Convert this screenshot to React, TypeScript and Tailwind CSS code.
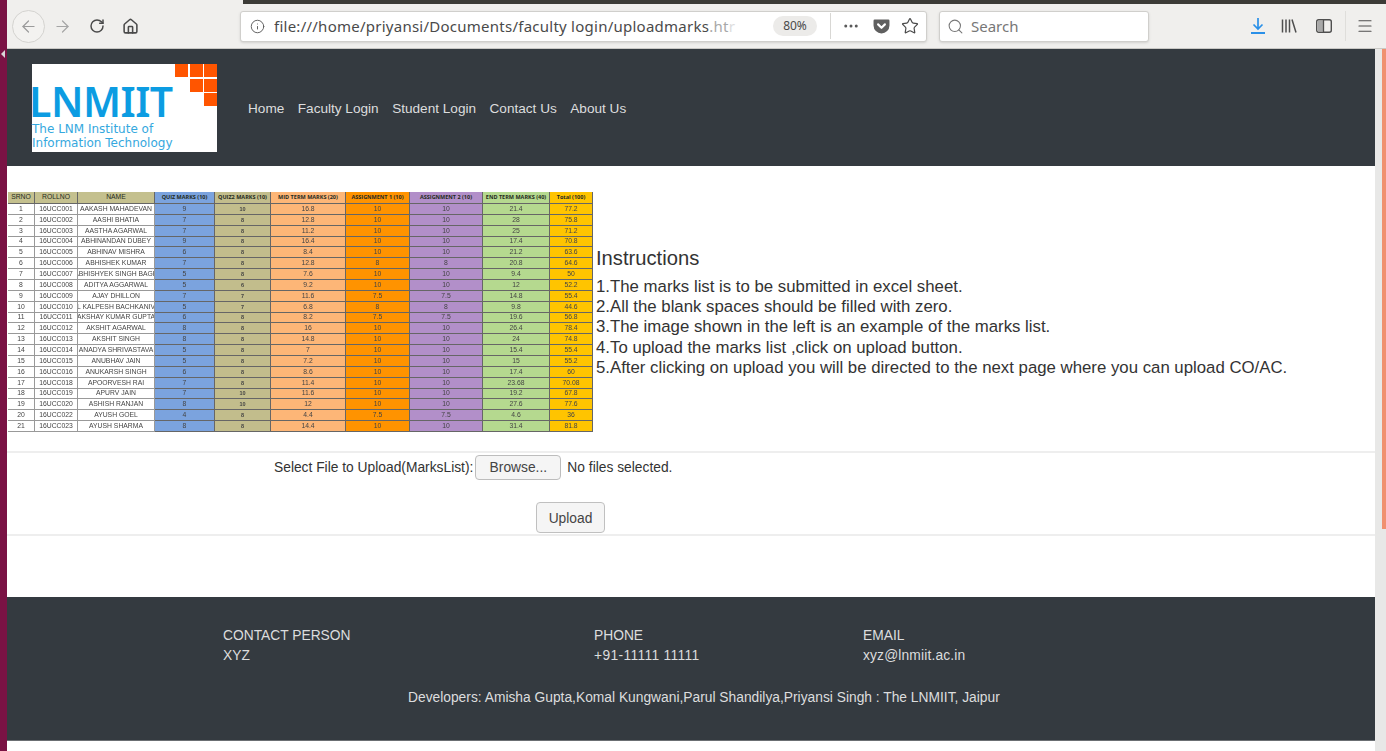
import { ArrowLeft, ArrowRight, Ellipsis, Home, Info, Menu, RotateCw, Search, Star } from "lucide-react";

const font = "font-['Liberation_Sans',Arial,sans-serif]";

const cols = ["bg-white", "bg-white", "bg-white", "bg-[#7ba3de]", "bg-[#c2bd8c]", "bg-[#fdb677]", "bg-[#ff9300]", "bg-[#b28fc9]", "bg-[#b5d98f]", "bg-[#ffc400]"];

const headers = ["SRNO", "ROLLNO", "NAME", "QUIZ MARKS (10)", "QUIZ2 MARKS (10)", "MID TERM MARKS (20)", "ASSIGNMENT 1 (10)", "ASSIGNMENT 2 (10)", "END TERM MARKS (40)", "Total (100)"];

const rows = [
  ["1", "16UCC001", "AAKASH MAHADEVAN", "9", "10", "16.8", "10", "10", "21.4", "77.2"],
  ["2", "16UCC002", "AASHI BHATIA", "7", "8", "12.8", "10", "10", "28", "75.8"],
  ["3", "16UCC003", "AASTHA AGARWAL", "7", "8", "11.2", "10", "10", "25", "71.2"],
  ["4", "16UCC004", "ABHINANDAN DUBEY", "9", "8", "16.4", "10", "10", "17.4", "70.8"],
  ["5", "16UCC005", "ABHINAV MISHRA", "6", "8", "8.4", "10", "10", "21.2", "63.6"],
  ["6", "16UCC006", "ABHISHEK KUMAR", "7", "8", "12.8", "8", "8", "20.8", "64.6"],
  ["7", "16UCC007", "ABHISHYEK SINGH BAGH", "5", "8", "7.6", "10", "10", "9.4", "50"],
  ["8", "16UCC008", "ADITYA AGGARWAL", "5", "6", "9.2", "10", "10", "12", "52.2"],
  ["9", "16UCC009", "AJAY DHILLON", "7", "7", "11.6", "7.5", "7.5", "14.8", "55.4"],
  ["10", "16UCC010", "L KALPESH BACHKANIV", "5", "7", "6.8", "8", "8", "9.8", "44.6"],
  ["11", "16UCC011", "AKSHAY KUMAR GUPTA", "6", "8", "8.2", "7.5", "7.5", "19.6", "56.8"],
  ["12", "16UCC012", "AKSHIT AGARWAL", "8", "8", "16", "10", "10", "26.4", "78.4"],
  ["13", "16UCC013", "AKSHIT SINGH", "8", "8", "14.8", "10", "10", "24", "74.8"],
  ["14", "16UCC014", "ANADYA SHRIVASTAVA", "5", "8", "7", "10", "10", "15.4", "55.4"],
  ["15", "16UCC015", "ANUBHAV JAIN", "5", "8", "7.2", "10", "10", "15", "55.2"],
  ["16", "16UCC016", "ANUKARSH SINGH", "6", "8", "8.6", "10", "10", "17.4", "60"],
  ["17", "16UCC018", "APOORVESH RAI", "7", "8", "11.4", "10", "10", "23.68", "70.08"],
  ["18", "16UCC019", "APURV JAIN", "7", "10", "11.6", "10", "10", "19.2", "67.8"],
  ["19", "16UCC020", "ASHISH RANJAN", "8", "10", "12", "10", "10", "27.6", "77.6"],
  ["20", "16UCC022", "AYUSH GOEL", "4", "8", "4.4", "7.5", "7.5", "4.6", "36"],
  ["21", "16UCC023", "AYUSH SHARMA", "8", "8", "14.4", "10", "10", "31.4", "81.8"],
];

const instructions = [
  "1.The marks list is to be submitted in excel sheet.",
  "2.All the blank spaces should be filled with zero.",
  "3.The image shown in the left is an example of the marks list.",
  "4.To upload the marks list ,click on upload button.",
  "5.After clicking on upload you will be directed to the next page where you can upload CO/AC.",
];

function Toolbar() {
  return (
    <div className="flex h-[45px] items-center border-b border-[#c9c8c5] bg-[#f0efed] font-['Noto_Sans',sans-serif] text-[#4a4a4a]">
      <div className="ml-[5px] flex h-[33px] w-[33px] items-center justify-center rounded-full border border-[#d4d3d0] bg-[#f3f2f0]">
        <ArrowLeft size={19} strokeWidth={1.5} className="text-[#9b9b9b]" />
      </div>
      <ArrowRight size={19} strokeWidth={1.5} className="ml-[8px] text-[#a5a5a5]" />
      <RotateCw size={16} strokeWidth={2.2} className="ml-[17px] text-[#4a4a4a]" />
      <Home size={17} strokeWidth={2.2} className="ml-[17px] text-[#4a4a4a]" />

      <div className="ml-[101px] flex h-[31px] w-[687px] items-center rounded-[3px] border border-[#d0cfcc] bg-white shadow-sm">
        <Info size={15} strokeWidth={1.5} className="ml-[9px] text-[#5a5a5a]" />
        <div className="ml-[9px] w-[463px] overflow-hidden whitespace-nowrap text-[15px] tracking-[0.25px]">
          file:///home/priyansi/Documents/faculty login/uploadmarks<span className="text-[#a8a8a8]">.ht</span>
          <span className="text-[#dddddd]">r</span>
        </div>
        <div className="ml-[36px] flex h-[20px] w-[44px] items-center justify-center rounded-full bg-[#ecebe9] text-[12px]">80%</div>
        <div className="ml-[13px] h-[26px] w-px bg-[#d8d7d4]" />
        <Ellipsis size={18} className="ml-[11px] text-[#5a5a5a]" />
        <svg width="17" height="17" viewBox="0 0 16 16" className="ml-[13px]">
          <path d="M1.5 1.5h13a1 1 0 0 1 1 1V7a7.5 7.5 0 0 1-15 0V2.5a1 1 0 0 1 1-1z" fill="#5f5f5f" />
          <path d="M4.8 6l3.2 3.2L11.2 6" fill="none" stroke="#fff" strokeWidth="2" strokeLinecap="round" strokeLinejoin="round" />
        </svg>
        <Star size={18} strokeWidth={1.6} className="ml-[11px] text-[#4a4a4a]" />
      </div>

      <div className="ml-[12px] flex h-[31px] w-[210px] items-center rounded-[3px] border border-[#d0cfcc] bg-white shadow-sm">
        <Search size={17} strokeWidth={1.5} className="ml-[7px] text-[#777]" />
        <span className="ml-[7px] text-[15px] text-[#777]">Search</span>
      </div>

      <svg width="18" height="20" viewBox="0 0 18 20" className="ml-[100px]">
        <path d="M9 2v11M4.5 8.5L9 13l4.5-4.5" fill="none" stroke="#2a90e8" strokeWidth="1.7" />
        <path d="M2 17h14" stroke="#2a90e8" strokeWidth="2" />
      </svg>
      <svg width="18" height="18" viewBox="0 0 18 18" className="ml-[13px]">
        <path d="M2.5 2.5v13M6 2.5v13M9.5 2.5v13M12 2.5l4 13" fill="none" stroke="#4f4f4f" strokeWidth="1.5" />
      </svg>
      <svg width="18" height="18" viewBox="0 0 18 18" className="ml-[17px]">
        <rect x="1.7" y="2.7" width="14.6" height="12.6" rx="2" fill="none" stroke="#4f4f4f" strokeWidth="1.4" />
        <rect x="3" y="4" width="5" height="10" fill="#a8a8a8" />
        <path d="M8.5 3v12" stroke="#4f4f4f" strokeWidth="1.3" />
      </svg>
      <div className="ml-[12px] h-[30px] w-px bg-[#dfdedb]" />
      <Menu size={18} strokeWidth={1.6} className="ml-[10px] text-[#4f4f4f]" />
    </div>
  );
}

function Logo() {
  return (
    <div className="relative h-[88px] w-[185px] bg-white text-[#0c9ce2]">
      <svg width="185" height="88" viewBox="0 0 185 88" className="absolute inset-0">
        <rect x="143" y="0" width="13" height="13" fill="#ff5500" />
        <rect x="158" y="0" width="13" height="13" fill="#ff5500" />
        <rect x="172" y="0" width="13" height="13" fill="#ff5500" />
        <rect x="158" y="15" width="13" height="13" fill="#ff5500" />
        <rect x="172" y="15" width="13" height="13" fill="#ff5500" />
        <rect x="172" y="29" width="13" height="13" fill="#ff5500" />
      </svg>
      <div className="absolute left-[-3px] top-[22px] font-['Noto_Sans',sans-serif] text-[41px] font-semibold leading-[30px] tracking-[-0.5px]">LNMIIT</div>
      <div className="absolute left-0 top-[58px] font-['DejaVu_Sans',sans-serif] text-[12px] leading-[14.5px] text-[#35a8de]">
        The LNM Institute of
        <br />
        Information Technology
      </div>
    </div>
  );
}

function MarksTable() {
  return (
    <div className="grid w-[585px] shrink-0 grid-cols-[27px_43px_77px_60px_56px_75px_64px_73px_67px_43px] grid-rows-[12px_repeat(21,10.86px)] blur-[0.3px]">
      {headers.map((h, i) => (
        <div
          key={h}
          className={`flex items-center justify-center overflow-hidden whitespace-nowrap border-b border-r border-[#666] text-[#1f2a20] ${
            i < 3 ? "bg-[#c4c08e] text-[6.8px]" : `${cols[i]} font-['Open_Sans',sans-serif] text-[5.5px] font-bold`
          }`}
        >
          {h}
        </div>
      ))}
      {rows.map((row) =>
        row.map((cell, i) => (
          <div
            key={`${row[1]}-${i}`}
            className={`flex items-center justify-center overflow-hidden whitespace-nowrap border-b border-r text-[#444] ${cols[i]} ${
              i < 3 ? "border-[#999]" : "border-[#666]"
            } ${i === 4 ? "text-[5.5px] font-bold text-[#222]" : "text-[6.8px]"}`}
          >
            {cell}
          </div>
        )),
      )}
    </div>
  );
}

export default function App() {
  return (
    <div className={`flex h-[751px] w-[1386px] overflow-hidden bg-white ${font}`}>
      <div className="flex w-[7px] shrink-0 flex-col bg-[#7a1244]">
        <div className="ml-[1px] mt-[50px] h-0 w-0 border-y-[4px] border-r-[4px] border-y-transparent border-r-[#d8d8d8]" />
      </div>

      <div className="flex min-w-0 flex-1 flex-col">
        <div className="flex h-[49px] flex-col bg-[#f0efed]">
          <div className="ml-[236px] h-[4px] bg-[#3c3b37]" />
          <Toolbar />
        </div>

        <div className="flex flex-1">
          <main className="flex w-[1368px] flex-col">
            <header className="flex h-[117px] items-center bg-[#343a40] pl-[25px]">
              <Logo />
              <nav className="ml-[31px] mt-[3px] flex gap-[13.5px] text-[13.6px] text-[#dcddde]">
                <span>Home</span>
                <span>Faculty Login</span>
                <span>Student Login</span>
                <span>Contact Us</span>
                <span>About Us</span>
              </nav>
            </header>

            <section className="mt-[26px] flex items-center pl-[1px] text-[#333]">
              <MarksTable />
              <div className="ml-[3px]">
                <h2 className="mb-[7px] text-[20.2px] leading-[24px]">Instructions</h2>
                <ul className="text-[16.8px] leading-[20.4px]">
                  {instructions.map((line) => (
                    <li key={line}>{line}</li>
                  ))}
                </ul>
              </div>
            </section>

            <section className="mt-[19px] h-[85px] border-y-2 border-[#eeeeee] text-[13.8px] text-[#333]">
              <div className="flex h-[27px] items-end pl-[267px]">
                <span className="mb-[1px]">Select File to Upload(MarksList):</span>
                <button className="ml-[2px] h-[25px] w-[86px] rounded-[4px] border border-[#bdbdbd] bg-[#f5f5f5] pt-[2px] text-[13.8px] text-[#444]">
                  Browse...
                </button>
                <span className="mb-[1px] ml-[6px]">No files selected.</span>
              </div>
              <button className="ml-[529px] mt-[22px] h-[31px] w-[69px] rounded-[4px] border border-[#c0c0c0] bg-[#f5f5f5] pt-[4px] text-[13.8px] text-[#444]">
                Upload
              </button>
            </section>

            <footer className="mt-[61px] h-[144px] border-b border-[#6b6f73] bg-[#343a40] pt-[29px] text-[13.8px] leading-[20px] text-[#dcddde]">
              <div className="flex pl-[216px]">
                <div className="w-[371px]">
                  <div>CONTACT PERSON</div>
                  <div>XYZ</div>
                </div>
                <div className="w-[269px]">
                  <div>PHONE</div>
                  <div className="tracking-[0.35px]">+91-11111 11111</div>
                </div>
                <div>
                  <div>EMAIL</div>
                  <div className="tracking-[0.15px]">xyz@lnmiit.ac.in</div>
                </div>
              </div>
              <p className="mt-[22px] pl-[401px]">Developers: Amisha Gupta,Komal Kungwani,Parul Shandilya,Priyansi Singh : The LNMIIT, Jaipur</p>
            </footer>
          </main>

          <div className="flex w-[11px] justify-end bg-[#e8e8e7]">
            <div className="h-[480px] w-[4px] bg-[#f0906f]" />
          </div>
        </div>
      </div>
    </div>
  );
}
